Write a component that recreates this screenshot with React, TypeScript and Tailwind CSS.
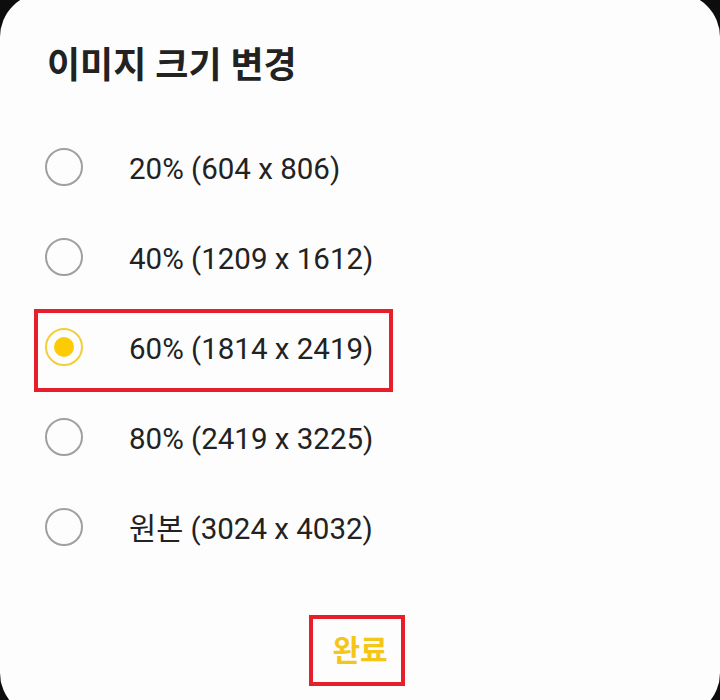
import React from "react";

const options = [
  { label: "20% (604 x 806)", selected: false },
  { label: "40% (1209 x 1612)", selected: false },
  { label: "60% (1814 x 2419)", selected: true },
  { label: "80% (2419 x 3225)", selected: false },
  { label: "원본 (3024 x 4032)", selected: false },
];

function Radio({ selected }: { selected: boolean }) {
  if (selected) {
    return (
      <span className="flex h-[38px] w-[38px] shrink-0 items-center justify-center rounded-full border-2 border-[#f2cf3a]">
        <span className="h-[20px] w-[20px] rounded-full bg-[#fccb05]" />
      </span>
    );
  }
  return <span className="h-[38px] w-[38px] shrink-0 rounded-full border-2 border-[#a0a0a0]" />;
}

export default function App() {
  return (
    <div
      className="h-[700px] w-[720px] overflow-hidden bg-[#0d0d0d]"
      style={{ fontFamily: "Roboto, 'Noto Sans CJK KR', sans-serif" }}
    >
      <div className="mt-[-7px] flex h-[724px] flex-col rounded-[44px] bg-[#fdfdfd]">
        <div className="pl-[47px] pt-[53px] text-[36px] font-bold leading-[40px] text-[#222222]">
          이미지 크기 변경
        </div>
        <div className="mt-[36px] flex flex-col">
          {options.map((o) => (
            <div key={o.label} className="relative flex h-[90px] items-center pl-[45px]">
              <Radio selected={o.selected} />
              <span className="ml-[46px] mt-[5px] text-[29.5px] leading-none text-[#222222]">{o.label}</span>
              {o.selected && (
                <span className="pointer-events-none absolute left-[34px] top-[7px] h-[83px] w-[359px] border-[4px] border-[#e5202b]" />
              )}
            </div>
          ))}
        </div>
        <div className="mt-[43px] flex justify-center pr-[6px]">
          <span className="flex h-[71px] w-[96px] items-center justify-center border-[4px] border-[#e5202b] pl-[6px] text-[30px] font-bold text-[#f5c518]">
            완료
          </span>
        </div>
      </div>
    </div>
  );
}
